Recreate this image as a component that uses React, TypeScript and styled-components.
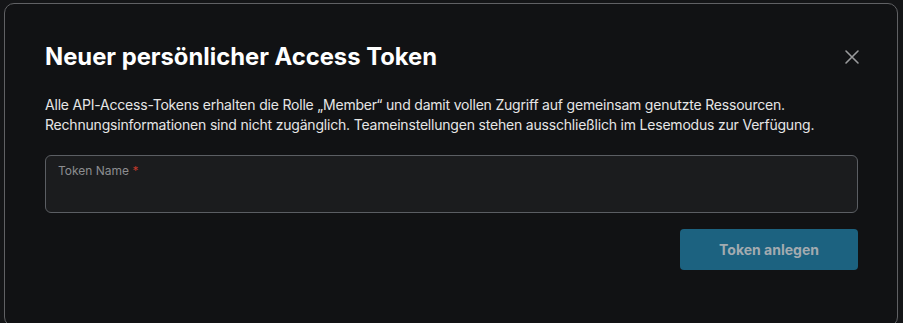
import React from "react";
import styled, { createGlobalStyle } from "styled-components";

const GlobalStyle = createGlobalStyle`
  html, body {
    margin: 0;
    padding: 0;
    background: #141517;
    font-family: Inter, "Noto Sans", sans-serif;
  }
`;

const Page = styled.div`
  width: 903px;
  height: 323px;
  overflow: hidden;
  padding: 3px 5px 0 4px;
  box-sizing: border-box;
`;

const Modal = styled.div`
  box-sizing: border-box;
  width: 894px;
  height: 324px;
  background: #111214;
  border: 1px solid #606164;
  border-radius: 10px;
  padding: 36px 35px 0 40px;
  display: flex;
  flex-direction: column;
`;

const Header = styled.div`
  display: flex;
  align-items: center;
  justify-content: space-between;
`;

const Title = styled.h2`
  margin: 0;
  font-size: 23.8px;
  line-height: 34px;
  font-weight: 700;
  color: #ffffff;
`;

const CloseButton = styled.button`
  background: none;
  border: none;
  padding: 0;
  width: 20px;
  height: 20px;
  display: flex;
  align-items: center;
  justify-content: center;
  color: #9a9b9d;
  cursor: pointer;
`;

const Description = styled.p`
  margin: 21px 4px 0 0;
  font-size: 14px;
  line-height: 20px;
  letter-spacing: -0.2px;
  color: #e6e6e6;
`;

const Field = styled.div`
  margin: 20px 4px 0 0;
  height: 58px;
  box-sizing: border-box;
  border: 1px solid #5b5e63;
  border-radius: 6px;
  background: #1b1c1e;
  padding: 7px 12px;
`;

const Label = styled.label`
  display: block;
  font-size: 12px;
  line-height: 16px;
  color: #8c8d90;
`;

const Required = styled.span`
  color: #c0392b;
`;

const Footer = styled.div`
  display: flex;
  justify-content: flex-end;
  margin: 16px 4px 0 0;
`;

const PrimaryButton = styled.button`
  width: 178px;
  height: 41px;
  border: none;
  border-radius: 4px;
  background: #1c6280;
  color: #a3abb0;
  font-family: Inter, "Noto Sans", sans-serif;
  font-size: 14px;
  font-weight: 700;
`;

export default function App() {
  return (
    <>
      <GlobalStyle />
      <Page>
        <Modal>
          <Header>
            <Title>Neuer persönlicher Access Token</Title>
            <CloseButton aria-label="Schließen">
              <svg width="16" height="16" viewBox="0 0 16 16" fill="none" stroke="currentColor" strokeWidth="1.6" strokeLinecap="round">
                <path d="M2 2L14 14M14 2L2 14" />
              </svg>
            </CloseButton>
          </Header>
          <Description>
            Alle API-Access-Tokens erhalten die Rolle „Member“ und damit vollen Zugriff auf gemeinsam genutzte Ressourcen.
            <br />
            Rechnungsinformationen sind nicht zugänglich. Teameinstellungen stehen ausschließlich im Lesemodus zur Verfügung.
          </Description>
          <Field>
            <Label>
              Token Name <Required>*</Required>
            </Label>
          </Field>
          <Footer>
            <PrimaryButton disabled>Token anlegen</PrimaryButton>
          </Footer>
        </Modal>
      </Page>
    </>
  );
}
